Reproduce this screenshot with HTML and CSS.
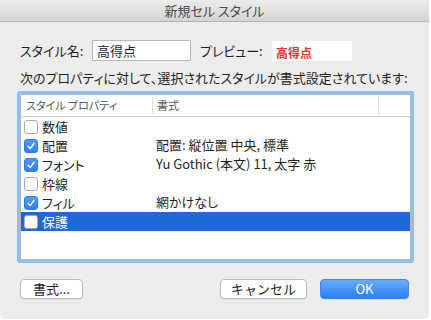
FILE: index.html
```html
<!DOCTYPE html>
<html lang="ja">
<head>
    <meta charset="UTF-8">
    <title>新規セル スタイル</title>
    <link rel="stylesheet" href="styles.css">
</head>
<body>
    <div class="dialog">
        <div class="dialog-title">新規セル スタイル</div>
        <div class="dialog-body">
            <div class="name-row">
                <span class="field-label">スタイル名:</span>
                <div class="text-input">高得点</div>
                <span class="field-label preview-label">プレビュー:</span>
                <div class="preview-box">高得点</div>
            </div>
            <div class="caption">次のプロパティに対して、選択されたスタイルが書式設定されています:</div>

            <div class="prop-list">
                <div class="prop-head">
                    <span class="head-cell">スタイル プロパティ</span>
                    <span class="head-cell">書式</span>
                    <span class="head-cell"></span>
                </div>
                <div class="prop-row">
                    <span class="prop-name"><span class="check"></span>数値</span>
                    <span class="prop-value"></span>
                </div>
                <div class="prop-row">
                    <span class="prop-name"><span class="check on"><svg viewBox="0 0 14 14"><path d="M3.5 7.4 L6 10 L10.6 3.8" /></svg></span>配置</span>
                    <span class="prop-value">配置: 縦位置 中央, 標準</span>
                </div>
                <div class="prop-row">
                    <span class="prop-name"><span class="check on"><svg viewBox="0 0 14 14"><path d="M3.5 7.4 L6 10 L10.6 3.8" /></svg></span>フォント</span>
                    <span class="prop-value">Yu Gothic (本文) 11, 太字 赤</span>
                </div>
                <div class="prop-row">
                    <span class="prop-name"><span class="check"></span>枠線</span>
                    <span class="prop-value"></span>
                </div>
                <div class="prop-row">
                    <span class="prop-name"><span class="check on"><svg viewBox="0 0 14 14"><path d="M3.5 7.4 L6 10 L10.6 3.8" /></svg></span>フィル</span>
                    <span class="prop-value">網かけなし</span>
                </div>
                <div class="prop-row selected">
                    <span class="prop-name"><span class="check"></span>保護</span>
                    <span class="prop-value"></span>
                </div>
            </div>

            <div class="button-row">
                <button class="btn btn-format">書式...</button>
                <div class="button-group">
                    <button class="btn btn-cancel">キャンセル</button>
                    <button class="btn btn-ok">OK</button>
                </div>
            </div>
        </div>
    </div>
</body>
</html>
```

FILE: styles.css
```css
html, body {
    margin: 0;
    padding: 0;
}
body {
    background-color: #ffffff;
    font-family: "Noto Sans CJK JP", "Liberation Sans", sans-serif;
    font-size: 13px;
    font-feature-settings: "palt";
    color: #1f1f1f;
}
.dialog {
    width: 429px;
    height: 319px;
    background-color: #ececec;
    border-radius: 0 0 5px 5px;
    overflow: hidden;
}
.dialog-title {
    height: 21px;
    line-height: 22px;
    text-align: center;
    font-size: 13px;
    color: #4b4b4b;
    background: linear-gradient(#ebebeb, #d4d4d4);
    border-bottom: 1px solid #b3b3b3;
}
.dialog-body {
    padding: 18px 18px 0 20px;
}

/* name + preview */
.name-row {
    display: flex;
    align-items: center;
    height: 21px;
}
.field-label {
    width: 72px;
    line-height: 21px;
}
.preview-label {
    margin-left: 9px;
}
.text-input {
    box-sizing: border-box;
    width: 99px;
    height: 21px;
    line-height: 19px;
    padding-left: 4px;
    background-color: #ffffff;
    border: 1px solid #b9b9b9;
}
.preview-box {
    box-sizing: border-box;
    width: 80px;
    height: 20px;
    padding: 3px 0 0 4px;
    line-height: 17px;
    background-color: #ffffff;
    color: #e8322b;
    font-weight: bold;
    font-size: 12px;
}
.caption {
    margin-top: 9px;
    line-height: 16px;
    white-space: nowrap;
}

/* property list */
.prop-list {
    margin-top: 8px;
    height: 164px;
    background-color: #ffffff;
    border: 1px solid #b7b7b7;
    box-shadow: 0 0 0 3px #8dbff2;
    border-radius: 1px;
}
.prop-head {
    display: grid;
    grid-template-columns: 131px 226px 1fr;
    height: 21px;
    border-bottom: 1px solid #cfcfcf;
}
.head-cell {
    font-size: 11px;
    color: #555555;
    line-height: 21px;
    padding-left: 5px;
    position: relative;
}
.head-cell + .head-cell::before {
    content: "";
    position: absolute;
    left: 0;
    top: 2px;
    bottom: 2px;
    border-left: 1px solid #dddddd;
}
.prop-row {
    display: grid;
    grid-template-columns: 131px 1fr;
    height: 19px;
    line-height: 18px;
}
.prop-name {
    display: flex;
    align-items: center;
    gap: 4px;
    padding-left: 3px;
}
.prop-value {
    padding-left: 4px;
}
.prop-row.selected {
    background-color: #1e69d6;
    color: #ffffff;
}
.check {
    box-sizing: border-box;
    width: 14px;
    height: 14px;
    border-radius: 3px;
    background-color: #ffffff;
    border: 1px solid #aaaaaa;
    display: inline-flex;
}
.check.on {
    background: linear-gradient(#4f9bf8, #2f82f4);
    border-color: #2f7ce8;
}
.check svg {
    width: 12px;
    height: 12px;
    fill: none;
    stroke: #ffffff;
    stroke-width: 1.6;
    stroke-linecap: round;
    stroke-linejoin: round;
}

/* buttons */
.button-row {
    display: flex;
    justify-content: space-between;
    margin-top: 19px;
    padding-right: 2px;
}
.button-group {
    display: flex;
    gap: 13px;
}
.btn {
    box-sizing: border-box;
    height: 20px;
    padding: 0;
    font-family: inherit;
    font-size: 13px;
    line-height: 18px;
    color: #222222;
    background-color: #ffffff;
    border: 1px solid #bdbdbd;
    border-radius: 4px;
    box-shadow: 0 1px 0 rgba(0, 0, 0, 0.06);
}
.btn-format {
    width: 63px;
}
.btn-cancel {
    width: 87px;
}
.btn-ok {
    width: 89px;
    color: #ffffff;
    border-color: #3e86f1;
    background: linear-gradient(#6aacfb, #2a7ef5);
}
```
